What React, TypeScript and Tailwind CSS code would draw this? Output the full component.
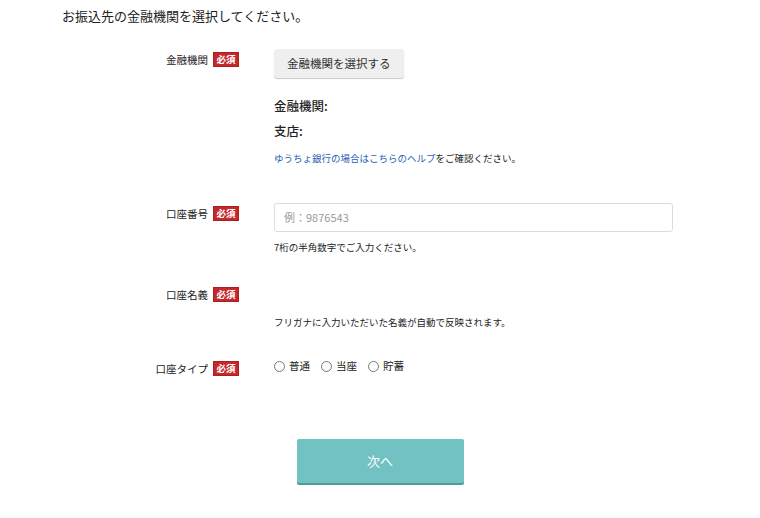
import React from "react";

const font = { fontFamily: '"Noto Sans CJK JP", "Noto Sans", sans-serif' };

function Badge() {
  return (
    <span className="ml-[5px] inline-flex h-[15px] w-[26px] items-center justify-center border border-[#a91f22] bg-[#c4282b] text-[9.5px] font-bold leading-none text-white">
      必須
    </span>
  );
}

function Label({ text }: { text: string }) {
  return (
    <div className="flex w-[177px] shrink-0 items-center justify-end self-start pt-[3px] text-[10.5px] leading-[15px] text-[#222]">
      <span>{text}</span>
      <Badge />
    </div>
  );
}

function Radio({ text }: { text: string }) {
  return (
    <label className="flex items-center gap-[4px]">
      <span className="inline-block h-[11px] w-[11px] rounded-full border border-[#777] bg-white" />
      <span>{text}</span>
    </label>
  );
}

export default function App() {
  return (
    <div className="h-[518px] w-[760px] bg-white text-[#222]" style={font}>
      <div className="pl-[62px] pt-[6px] text-[13px] leading-[20px] text-[#222]">
        お振込先の金融機関を選択してください。
      </div>

      <div className="pl-[62px]">
        {/* Row 1 */}
        <div className="mt-[23px] flex items-start">
          <Label text="金融機関" />
          <div className="ml-[35px] flex flex-col items-start">
            <button className="h-[29px] rounded-[3px] bg-[#efefef] px-[13px] text-[11.5px] text-[#333] shadow-[0_1px_1px_#c8c8c8]">
              金融機関を選択する
            </button>
            <div className="mt-[15px] text-[12.5px] font-medium leading-[25px] text-[#222]">
              <div>金融機関:</div>
              <div>支店:</div>
            </div>
            <div className="mt-[7px] text-[9.5px] leading-[16px] text-[#222]">
              <span className="text-[#2b5fb4]">ゆうちょ銀行の場合はこちらのヘルプ</span>
              をご確認ください。
            </div>
          </div>
        </div>

        {/* Row 2 */}
        <div className="mt-[37px] flex items-start">
          <Label text="口座番号" />
          <div className="ml-[35px] flex flex-col">
            <div className="flex h-[29px] w-[399px] items-center rounded-[3px] border border-[#dcdcdc] pl-[9px] text-[11px] text-[#9a9a9a]">
              例：9876543
            </div>
            <div className="mt-[7px] text-[9.5px] leading-[16px] text-[#222]">
              7桁の半角数字でご入力ください。
            </div>
          </div>
        </div>

        {/* Row 3 */}
        <div className="mt-[29px] flex items-start">
          <Label text="口座名義" />
          <div className="ml-[35px] mt-[30px] text-[9.5px] leading-[16px] text-[#222]">
            フリガナに入力いただいた名義が自動で反映されます。
          </div>
        </div>

        {/* Row 4 */}
        <div className="mt-[28px] flex items-start">
          <Label text="口座タイプ" />
          <div className="ml-[35px] flex items-center gap-[11px] text-[10.5px] leading-[16px] text-[#222]">
            <Radio text="普通" />
            <Radio text="当座" />
            <Radio text="貯蓄" />
          </div>
        </div>
      </div>

      <div className="mt-[63px] flex justify-center">
        <button className="h-[44px] w-[167px] rounded-[2px] bg-[#72c1c3] text-[13px] text-white shadow-[0_2px_0_#4f9a9c]">
          次へ
        </button>
      </div>
    </div>
  );
}
